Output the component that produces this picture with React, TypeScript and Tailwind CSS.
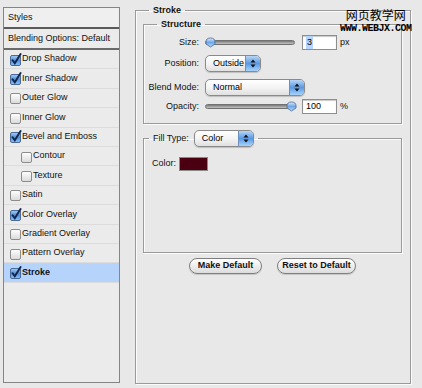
import React from "react";

const rows = [
  { label: "Drop Shadow", on: true },
  { label: "Inner Shadow", on: true },
  { label: "Outer Glow", on: false },
  { label: "Inner Glow", on: false },
  { label: "Bevel and Emboss", on: true },
  { label: "Contour", on: false, indent: true },
  { label: "Texture", on: false, indent: true },
  { label: "Satin", on: false },
  { label: "Color Overlay", on: true },
  { label: "Gradient Overlay", on: false },
  { label: "Pattern Overlay", on: false },
  { label: "Stroke", on: true, selected: true },
];

function Checkbox({ on }: { on: boolean }) {
  return (
    <svg width="12" height="13" viewBox="0 0 12 13" className="shrink-0">
      <defs>
        <linearGradient id="cbOff" x1="0" y1="0" x2="0" y2="1">
          <stop offset="0" stopColor="#ffffff" />
          <stop offset="1" stopColor="#d9d9d9" />
        </linearGradient>
        <linearGradient id="cbOn" x1="0" y1="0" x2="0" y2="1">
          <stop offset="0" stopColor="#a9cdf3" />
          <stop offset="0.5" stopColor="#4f8fdc" />
          <stop offset="1" stopColor="#8fc3f5" />
        </linearGradient>
      </defs>
      <rect x="0.5" y="2.5" width="10" height="10" rx="1.5" fill={on ? "url(#cbOn)" : "url(#cbOff)"} stroke={on ? "#4a6a99" : "#8c8c8c"} />
      {on && <path d="M2.6 7.2 L4.8 10.2 L10.6 1" stroke="#13254a" strokeWidth="1.9" fill="none" strokeLinecap="round" />}
    </svg>
  );
}

function Slider({ atEnd }: { atEnd: boolean }) {
  return (
    <div className="relative flex h-[12px] w-[90px] items-center">
      <div className="h-[5px] w-full rounded-full border border-[#707070] bg-gradient-to-b from-[#7a7a7a] to-[#c4c4c4]" />
      <svg width="11" height="11" viewBox="0 0 11 11" className={atEnd ? "absolute right-[-2px] top-[0px]" : "absolute left-[0px] top-[0px]"}>
        <defs>
          <linearGradient id="knob" x1="0" y1="0" x2="0" y2="1">
            <stop offset="0" stopColor="#dcecfc" />
            <stop offset="0.5" stopColor="#6fa6e6" />
            <stop offset="1" stopColor="#b9dcfb" />
          </linearGradient>
        </defs>
        <path d="M1 5 Q1 1 5.5 1 Q10 1 10 5 L10 7 L5.5 10 L1 7 Z" fill="url(#knob)" stroke="#55739c" strokeWidth="0.9" />
      </svg>
    </div>
  );
}

function Popup({ label, width }: { label: string; width: string }) {
  return (
    <div className={`flex h-[17px] items-stretch overflow-hidden rounded-[5px] border border-[#8a8a8a] bg-gradient-to-b from-white via-[#f4f4f4] to-[#e0e0e0] shadow-[0_1px_1px_rgba(0,0,0,0.18)] ${width}`}>
      <span className="flex flex-1 items-center pl-[7px] text-[9px] text-black">{label}</span>
      <span className="flex w-[15px] items-center justify-center border-l border-[#6e8fbd] bg-gradient-to-b from-[#b8d6f6] via-[#5a98e2] to-[#a6d3fb]">
        <svg width="6" height="9" viewBox="0 0 6 9">
          <path d="M3 0.5 L5.5 3.5 L0.5 3.5 Z M3 8.5 L5.5 5.5 L0.5 5.5 Z" fill="#111" />
        </svg>
      </span>
    </div>
  );
}

function NumberBox({ value, selected }: { value: string; selected?: boolean }) {
  return (
    <div className="flex h-[15px] w-[35px] items-center border border-[#8e8e8e] bg-white pl-[3px] text-[9px] text-black shadow-[inset_0_1px_1px_rgba(0,0,0,0.22)]">
      <span className={selected ? "bg-[#b5d5ff] px-[1px]" : ""}>{value}</span>
    </div>
  );
}

const groove = "border border-[#9a9a9a] shadow-[inset_1px_1px_0_#fbfbfb,1px_1px_0_#fbfbfb]";

export default function App() {
  return (
    <div className="relative flex h-[388px] w-[422px] items-start overflow-hidden bg-[#e8e8e8] font-['Liberation_Sans',Arial,sans-serif] text-[9px] text-[#111]">
      {/* styles list */}
      <div className="ml-[3px] mt-[7px] flex h-[376px] w-[117px] flex-col border border-[#858585] bg-[#ebebeb]">
        <div className="flex h-[19px] items-center bg-[#efefef] pl-[4px]">Styles</div>
        <div className="h-[2px] bg-[#5a5a5a]" />
        <div className="flex h-[19px] items-center pl-[4px]">Blending Options: Default</div>
        <div className="h-[2px] bg-[#6a6a6a]" />
        {rows.map((r) => (
          <div
            key={r.label}
            className={`flex h-[19.4px] items-center border-b border-[#dcdcdc] ${r.indent ? "pl-[17px]" : "pl-[6px]"} ${r.selected ? "bg-[#b5d3fb]" : ""}`}
          >
            <Checkbox on={r.on} />
            <span className={r.selected ? "font-bold" : ""}>{r.label}</span>
          </div>
        ))}
      </div>

      {/* stroke settings */}
      <fieldset className={`ml-[15px] mt-[4px] h-[380px] w-[276px] ${groove}`}>
        <legend className="ml-[13px] px-[4px] text-[9px] font-bold leading-[12px]">Stroke</legend>
        <div className="flex flex-col">
          <fieldset className={`ml-[7px] mr-[8px] mt-[2px] ${groove}`}>
            <legend className="ml-[13px] px-[4px] font-bold leading-[12px]">Structure</legend>
            <div className="flex flex-col pb-[9px] pt-[5px]">
              <div className="flex h-[15px] items-center">
                <span className="w-[55px] text-right">Size:</span>
                <div className="ml-[6px]"><Slider atEnd={false} /></div>
                <div className="ml-[7px]"><NumberBox value="3" selected /></div>
                <span className="ml-[3px]">px</span>
              </div>
              <div className="mt-[5px] flex h-[17px] items-center">
                <span className="w-[55px] text-right">Position:</span>
                <div className="ml-[6px]"><Popup label="Outside" width="w-[56px]" /></div>
              </div>
              <div className="mt-[7px] flex h-[17px] items-center">
                <span className="w-[55px] text-right">Blend Mode:</span>
                <div className="ml-[6px]"><Popup label="Normal" width="w-[100px]" /></div>
              </div>
              <div className="mt-[3px] flex h-[15px] items-center">
                <span className="w-[55px] text-right">Opacity:</span>
                <div className="ml-[6px]"><Slider atEnd /></div>
                <div className="ml-[7px]"><NumberBox value="100" /></div>
                <span className="ml-[3px]">%</span>
              </div>
            </div>
          </fieldset>

          <fieldset className={`ml-[7px] mr-[8px] mt-[6px] ${groove}`}>
            <legend className="ml-[5px] px-[4px]">
              <div className="flex h-[17px] items-center gap-[5px]">
                <span>Fill Type:</span>
                <Popup label="Color" width="w-[60px]" />
              </div>
            </legend>
            <div className="flex h-[105px] flex-col pl-[8px] pt-[10px]">
              <div className="flex items-center gap-[3px]">
                <span>Color:</span>
                <div className="h-[14px] w-[29px] border border-[#8a8a8a] bg-[#4b0011]" />
              </div>
            </div>
          </fieldset>

          <div className="ml-[7px] mr-[8px] mt-[5px] flex justify-center gap-[15px]">
            <button className="h-[16px] w-[73px] rounded-full border border-[#7e7e7e] bg-gradient-to-b from-white to-[#dcdcdc] text-[9px] font-bold shadow-[0_1px_1px_rgba(0,0,0,0.15)]">
              Make Default
            </button>
            <button className="h-[16px] w-[79px] rounded-full border border-[#7e7e7e] bg-gradient-to-b from-white to-[#dcdcdc] text-[9px] font-bold shadow-[0_1px_1px_rgba(0,0,0,0.15)]">
              Reset to Default
            </button>
          </div>
        </div>
      </fieldset>

      {/* watermark */}
      <div className="absolute left-[340px] top-[8px] flex flex-col items-center">
        <span className="font-['Noto_Sans_CJK_SC',sans-serif] text-[12px] leading-[14px] text-black">网页教学网</span>
        <span className="mt-[2px] font-['Liberation_Mono',monospace] text-[10px] font-bold leading-[9px] tracking-[-0.5px] text-black">WWW.WEBJX.COM</span>
      </div>
    </div>
  );
}
